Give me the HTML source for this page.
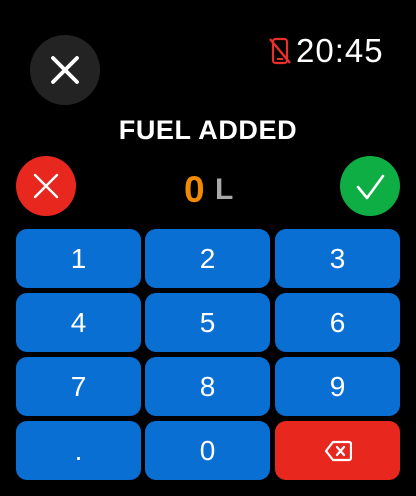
<!DOCTYPE html><html><head><style>
body{margin:0;width:416px;height:496px;background:#000;position:relative;overflow:hidden;font-family:"Liberation Sans",sans-serif}
.a{position:absolute}
.k{position:absolute;width:125px;height:59px;border-radius:11px;background:#0a6fd3;color:#fff;font-size:28px;display:flex;align-items:center;justify-content:center}
</style></head><body>
<div class="a" style="left:30px;top:35px;width:70px;height:70px;border-radius:50%;background:#232323"></div>
<svg class="a" style="left:30px;top:35px" width="70" height="70"><path d="M23 23L47 47M47 23L23 47" stroke="#fff" stroke-width="3.8" stroke-linecap="round"/></svg>
<svg class="a" style="left:268px;top:37px" width="24" height="28"><rect x="5" y="2" width="14" height="24" rx="2.5" fill="none" stroke="#e8302a" stroke-width="2.2"/><path d="M9 22h6" stroke="#e8302a" stroke-width="2"/><path d="M2 2L22 26" stroke="#e8302a" stroke-width="2.4"/></svg>
<div class="a" style="left:296px;top:32px;color:#fff;font-size:33px;line-height:38px;letter-spacing:1px">20:45</div>
<div class="a" style="left:0;width:416px;top:113px;text-align:center;color:#fff;font-weight:bold;font-size:27px;line-height:34px;letter-spacing:0.6px">FUEL ADDED</div>
<div class="a" style="left:16px;top:156px;width:60px;height:60px;border-radius:50%;background:#e8281f"></div>
<svg class="a" style="left:16px;top:156px" width="60" height="60"><path d="M19 19L41 41M41 19L19 41" stroke="#fff" stroke-width="2.4" stroke-linecap="round"/></svg>
<div class="a" style="left:340px;top:156px;width:60px;height:60px;border-radius:50%;background:#0fae45"></div>
<svg class="a" style="left:340px;top:156px" width="60" height="60"><path d="M18 31L27 42L43 20" stroke="#fff" stroke-width="2.6" fill="none" stroke-linecap="round" stroke-linejoin="round"/></svg>
<div class="a" style="left:184px;top:170px;color:#f08a00;font-weight:bold;font-size:37px;line-height:40px">0</div>
<div class="a" style="left:215px;top:173px;color:#a9a9a9;font-weight:bold;font-size:30px;line-height:34px">L</div>
<div class="k" style="left:16px;top:229px">1</div><div class="k" style="left:145px;top:229px">2</div><div class="k" style="left:275px;top:229px">3</div>
<div class="k" style="left:16px;top:293px">4</div><div class="k" style="left:145px;top:293px">5</div><div class="k" style="left:275px;top:293px">6</div>
<div class="k" style="left:16px;top:357px">7</div><div class="k" style="left:145px;top:357px">8</div><div class="k" style="left:275px;top:357px">9</div>
<div class="k" style="left:16px;top:421px">.</div><div class="k" style="left:145px;top:421px">0</div>
<div class="k" style="left:275px;top:421px;background:#e8281f"><svg width="28" height="22"><path d="M9 2H25a2 2 0 0 1 2 2V18a2 2 0 0 1-2 2H9L2 11Z" fill="none" stroke="#fff" stroke-width="2.2" stroke-linejoin="round"/><path d="M13 7L20 15M20 7L13 15" stroke="#fff" stroke-width="2.2" stroke-linecap="round"/></svg></div>
</body></html>
